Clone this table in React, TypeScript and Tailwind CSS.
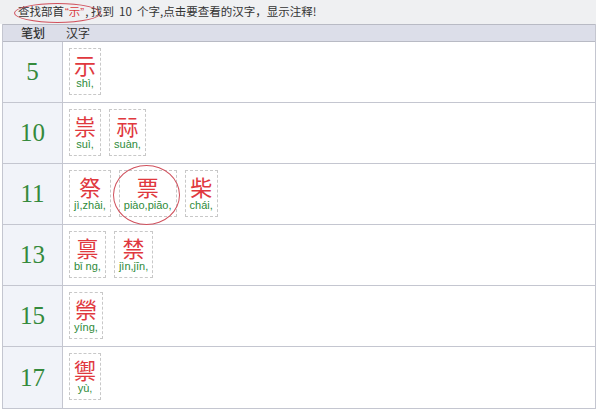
import React from "react";

type Item = { c: string; p: string; circled?: boolean };
const rows: { n: string; items: Item[] }[] = [
  { n: "5", items: [{ c: "示", p: "shì," }] },
  { n: "10", items: [{ c: "祟", p: "suì," }, { c: "祘", p: "suàn," }] },
  {
    n: "11",
    items: [
      { c: "祭", p: "jì,zhài," },
      { c: "票", p: "piào,piāo,", circled: true },
      { c: "柴", p: "chái," },
    ],
  },
  { n: "13", items: [{ c: "禀", p: "bǐ ng," }, { c: "禁", p: "jìn,jīn," }] },
  { n: "15", items: [{ c: "禜", p: "yíng," }] },
  { n: "17", items: [{ c: "禦", p: "yù," }] },
];

const cjk = { fontFamily: '"Noto Sans CJK SC", "Noto Sans", sans-serif' };
const lat = { fontFamily: '"Liberation Sans", Arial, sans-serif' };

export default function App() {
  return (
    <div className="w-[600px] h-[415px] bg-white relative" style={cjk}>
      <div className="w-[596px] h-[24px] bg-[#eff0f2] flex items-center pl-[18px] text-[11.5px] text-[#333] relative">
        <span>查找部首</span>
        <span className="text-[#d9383c] px-[1px]">
          <span style={lat}>“</span>示<span style={lat}>”</span>
        </span>
        <span>,&nbsp;找到&nbsp;&nbsp;10&nbsp;&nbsp;个字,点击要查看的汉字，显示注释!</span>
        <div className="absolute left-[14px] top-[3px] w-[87px] h-[20px] rounded-[50%] border border-[#d0505c]" />
      </div>
      <div className="ml-[2px] w-[594px] border-l border-r border-b border-[#c4c6d0]">
        <div className="flex h-[18px] bg-[#dcdee9] border-t border-b border-[#b8bac4] text-[12px] text-[#333] items-center">
          <div className="w-[60px] text-center font-medium">笔划</div>
          <div className="pl-[3px]">汉字</div>
        </div>
        {rows.map((r, i) => (
          <div
            key={r.n}
            className={`flex h-[61px] ${i < rows.length - 1 ? "border-b border-[#c4c6d0]" : ""}`}
          >
            <div
              className="w-[60px] shrink-0 bg-[#f1f3f9] border-r border-[#c4c6d0] flex items-center justify-center text-[25px] text-[#358a3c]"
              style={{ fontFamily: '"Liberation Serif", serif' }}
            >
              {r.n}
            </div>
            <div className="flex items-start gap-[8px] pl-[6px] pt-[6px]">
              {r.items.map((it) => (
                <div key={it.c} className="relative">
                  <div className="flex flex-col items-center border border-dashed border-[#c8c8c8] px-[4px] pt-[4px] h-[47px] min-w-[31px]">
                    <div className="text-[22px] leading-[23px] text-[#e0383e]">{it.c}</div>
                    <div className="text-[11px] leading-[13px] mt-[1px] text-[#2e8b3a]" style={lat}>
                      {it.p}
                    </div>
                  </div>
                  {it.circled && (
                    <div className="absolute left-[-6px] top-[-5px] w-[67px] h-[60px] rounded-[50%] border border-[#d0505c]" />
                  )}
                </div>
              ))}
            </div>
          </div>
        ))}
      </div>
    </div>
  );
}
